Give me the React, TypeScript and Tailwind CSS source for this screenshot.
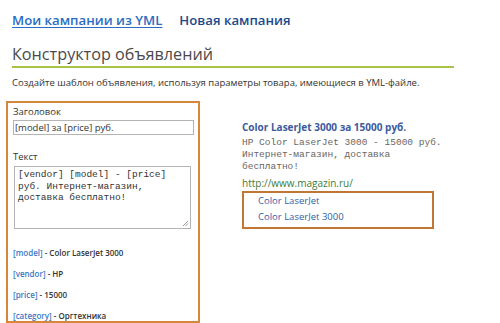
import React from 'react';

const sans = "font-['Open_Sans','DejaVu_Sans',sans-serif]";
const mono = "font-['Liberation_Mono','Courier_New',monospace]";

const legend = [
  { key: '[model]', value: 'Color LaserJet 3000' },
  { key: '[vendor]', value: 'HP' },
  { key: '[price]', value: '15000' },
  { key: '[category]', value: 'Оргтехника' },
];

export default function App() {
  return (
    <div className={`w-[500px] h-[323px] bg-white overflow-hidden pl-[6px] ${sans}`}>
      {/* вкладки */}
      <div className="ml-[6px] pt-[10px] flex items-center gap-[17px] text-[13.2px] font-semibold leading-[20px]">
        <span className="text-[#2b6cc4] underline underline-offset-2">Мои кампании из YML</span>
        <span className="text-[#1b4a8c]">Новая кампания</span>
      </div>

      {/* заголовок раздела */}
      <div className="ml-[6px] w-[442px] mt-[13px] border-b-2 border-[#a8c446] text-[16.2px] leading-[22px] text-[#4a4a4a] pb-[1px]">
        Конструктор объявлений
      </div>
      <p className="ml-[6px] mt-[9px] text-[9.5px] leading-[12px] text-[#333]">
        Создайте шаблон объявления, используя параметры товара, имеющиеся в YML-файле.
      </p>

      <div className="mt-[12px] flex">
        {/* редактор */}
        <div className="w-[194px] h-[222px] border-2 border-[#d8873a] px-[5px] pt-[2px]">
          <div className="text-[9.5px] leading-[14px] text-[#333]">Заголовок</div>
          <div className="mt-[1px] w-[181px] h-[15px] border border-[#b4b4b4] px-[1px] text-[9.5px] leading-[13px] text-[#333]">
            [model] за [price] руб.
          </div>
          <div className="mt-[15px] text-[9.5px] leading-[14px] text-[#333]">Текст</div>
          <div className="relative mt-[2px] ml-[1px] w-[177px] h-[63px] border border-[#b4b4b4] px-[3px] pt-[2px]">
            <div className={`${mono} text-[9.5px] leading-[11.5px] text-[#333]`}>
              [vendor] [model] - [price]
              <br />
              руб. Интернет-магазин,
              <br />
              доставка бесплатно!
            </div>
            <svg className="absolute right-[1px] bottom-[1px]" width="7" height="7" viewBox="0 0 7 7">
              <path d="M6 1L1 6M6 3.5L3.5 6" stroke="#999" strokeWidth="1" />
            </svg>
          </div>
          <div className="mt-[18px] flex flex-col gap-[9px] text-[8px] leading-[12px] font-semibold">
            {legend.map((item) => (
              <div key={item.key}>
                <span className="text-[#3b78c6]">{item.key}</span>
                <span className="text-[#333]"> - {item.value}</span>
              </div>
            ))}
          </div>
        </div>

        {/* превью объявления */}
        <div className="ml-[42px] pt-[19px] w-[220px]">
          <div className="text-[10px] leading-[14px] font-bold text-[#3c5a9c]">
            Color LaserJet 3000 за 15000 руб.
          </div>
          <div className={`${mono} mt-[3px] text-[9.5px] leading-[12px] text-[#666]`}>
            HP Color LaserJet 3000 - 15000 руб.
            <br />
            Интернет-магазин, доставка
            <br />
            бесплатно!
          </div>
          <div className="mt-[4px] text-[10px] leading-[13px] text-[#3f7a3a]">http://www.magazin.ru/</div>
          <div className="mt-[1px] w-[192px] h-[38px] border-2 border-[#c07634] pl-[14px] text-[9.5px] leading-[16px] text-[#2d62a8]">
            <div>Color LaserJet</div>
            <div>Color LaserJet 3000</div>
          </div>
        </div>
      </div>
    </div>
  );
}
